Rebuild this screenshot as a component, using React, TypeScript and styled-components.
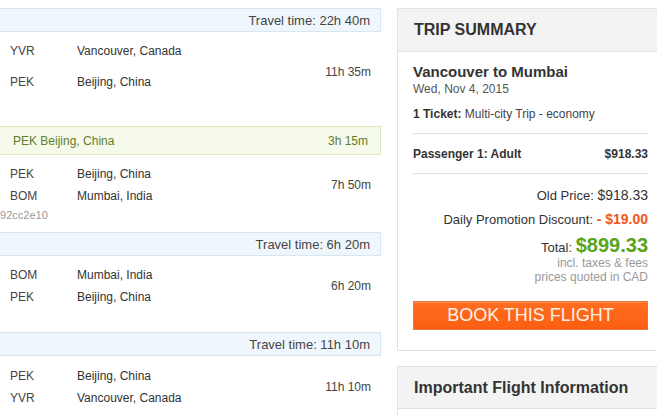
import React from 'react';
import styled, { createGlobalStyle } from 'styled-components';

const GlobalStyle = createGlobalStyle`
  html, body {
    margin: 0;
    padding: 0;
    background: #fff;
    overflow: hidden;
  }
  body {
    font-family: "Liberation Sans", Arial, sans-serif;
    color: #333;
  }
`;

const Page = styled.div`
  display: flex;
  align-items: flex-start;
  gap: 16px;
  width: 657px;
  height: 416px;
  padding-top: 8px;
  box-sizing: border-box;
  overflow: hidden;
`;

const Itinerary = styled.div`
  flex: 0 0 391px;
  margin-left: -10px;
  display: flex;
  flex-direction: column;
`;

const TravelBar = styled.div`
  height: 24px;
  box-sizing: border-box;
  border: 1px solid #d8e6ef;
  background: #f0f7fc;
  display: flex;
  align-items: center;
  justify-content: flex-end;
  padding-right: 10px;
  font-size: 13px;
  color: #444;
`;

const LayoverBar = styled.div`
  height: 29px;
  box-sizing: border-box;
  border: 1px solid #dce9bd;
  background: #f6faea;
  display: flex;
  align-items: center;
  justify-content: space-between;
  padding: 0 12px 0 22px;
  font-size: 12px;
  color: #5f7d2c;
`;

const Segment = styled.div<{ $top: number; $bottom: number; $gap: number }>`
  display: grid;
  grid-template-columns: 67px 1fr auto;
  row-gap: ${(p) => p.$gap}px;
  padding: ${(p) => p.$top}px 10px ${(p) => p.$bottom}px 20px;
  font-size: 12px;
  line-height: 22px;
`;

const Code = styled.div`
  grid-column: 1;
  color: #444;
`;

const City = styled.div`
  grid-column: 2;
  color: #333;
`;

const Duration = styled.div<{ $shift?: number }>`
  grid-column: 3;
  grid-row: 1 / span 2;
  align-self: center;
  padding-top: ${(p) => p.$shift ?? 0}px;
  color: #444;
`;

const FlightRef = styled.div`
  grid-column: 1 / -1;
  margin-left: -16px;
  font-size: 11px;
  line-height: 16px;
  color: #999;
`;

const Sidebar = styled.div`
  flex: 0 0 267px;
  display: flex;
  flex-direction: column;
  gap: 15px;
`;

const Panel = styled.div`
  border: 1px solid #e2e2e2;
  background: #fff;
`;

const PanelHeader = styled.div<{ $height: number }>`
  height: ${(p) => p.$height}px;
  display: flex;
  align-items: center;
  padding-left: 16px;
  background: #f3f3f3;
  border-bottom: 1px solid #e2e2e2;
  font-size: 16px;
  font-weight: bold;
  color: #333;
`;

const PanelBody = styled.div`
  padding: 11px 15px 20px;
  display: flex;
  flex-direction: column;
`;

const Route = styled.div`
  font-size: 15px;
  font-weight: bold;
  line-height: 18px;
  color: #333;
`;

const DateLine = styled.div`
  font-size: 12px;
  line-height: 16px;
  color: #555;
`;

const TicketLine = styled.div`
  margin-top: 9px;
  padding-bottom: 11px;
  border-bottom: 1px solid #e2e2e2;
  font-size: 12px;
  line-height: 16px;
  color: #444;

  b {
    color: #333;
  }
`;

const PassengerRow = styled.div`
  display: flex;
  justify-content: space-between;
  padding: 12px 0 11px;
  border-bottom: 1px solid #e2e2e2;
  font-size: 12px;
  font-weight: bold;
  line-height: 16px;
  color: #333;
`;

const PriceLine = styled.div<{ $mt: number; $lh: number }>`
  margin-top: ${(p) => p.$mt}px;
  height: ${(p) => p.$lh}px;
  text-align: right;
  font-size: 13px;
  line-height: ${(p) => p.$lh}px;
  color: #333;
`;

const Amount = styled.span<{ $size: number; $color: string; $bold?: boolean }>`
  font-size: ${(p) => p.$size}px;
  line-height: 1;
  color: ${(p) => p.$color};
  font-weight: ${(p) => (p.$bold ? 'bold' : 'normal')};
`;

const Note = styled.div`
  text-align: right;
  font-size: 12px;
  line-height: 14px;
  color: #999;
`;

const BookButton = styled.button`
  margin-top: 17px;
  height: 29px;
  width: 100%;
  border: 1px solid #f0743a;
  background: linear-gradient(#ff6e22, #fb5e10);
  color: #fff1e4;
  font-family: "Liberation Sans", Arial, sans-serif;
  font-size: 18px;
  line-height: 27px;
  padding: 0;
  cursor: pointer;
  box-shadow: inset 0 1px 0 rgba(255, 255, 255, 0.2);
`;

const App: React.FC = () => {
  return (
    <>
      <GlobalStyle />
      <Page>
        <Itinerary>
          <TravelBar>Travel time: 22h 40m</TravelBar>
          <Segment $top={8} $bottom={33} $gap={9}>
            <Code>YVR</Code>
            <City>Vancouver, Canada</City>
            <Duration $shift={11}>11h 35m</Duration>
            <Code>PEK</Code>
            <City>Beijing, China</City>
          </Segment>

          <LayoverBar>
            <span>PEK Beijing, China</span>
            <span>3h 15m</span>
          </LayoverBar>
          <Segment $top={8} $bottom={9} $gap={0}>
            <Code>PEK</Code>
            <City>Beijing, China</City>
            <Duration>7h 50m</Duration>
            <Code>BOM</Code>
            <City>Mumbai, India</City>
            <FlightRef>492cc2e10</FlightRef>
          </Segment>

          <TravelBar>Travel time: 6h 20m</TravelBar>
          <Segment $top={8} $bottom={24} $gap={0}>
            <Code>BOM</Code>
            <City>Mumbai, India</City>
            <Duration>6h 20m</Duration>
            <Code>PEK</Code>
            <City>Beijing, China</City>
          </Segment>

          <TravelBar>Travel time: 11h 10m</TravelBar>
          <Segment $top={9} $bottom={20} $gap={0}>
            <Code>PEK</Code>
            <City>Beijing, China</City>
            <Duration>11h 10m</Duration>
            <Code>YVR</Code>
            <City>Vancouver, Canada</City>
          </Segment>
        </Itinerary>

        <Sidebar>
          <Panel>
            <PanelHeader $height={42}>TRIP SUMMARY</PanelHeader>
            <PanelBody>
              <Route>Vancouver to Mumbai</Route>
              <DateLine>Wed, Nov 4, 2015</DateLine>
              <TicketLine>
                <b>1 Ticket:</b> Multi-city Trip - economy
              </TicketLine>
              <PassengerRow>
                <span>Passenger 1: Adult</span>
                <span>$918.33</span>
              </PassengerRow>
              <PriceLine $mt={13} $lh={18}>
                Old Price: <Amount $size={14} $color="#333">$918.33</Amount>
              </PriceLine>
              <PriceLine $mt={6} $lh={18}>
                Daily Promotion Discount:{' '}
                <Amount $size={14} $color="#f1561c" $bold>
                  - $19.00
                </Amount>
              </PriceLine>
              <PriceLine $mt={6} $lh={21}>
                Total:{' '}
                <Amount $size={20} $color="#58a51a" $bold>
                  $899.33
                </Amount>
              </PriceLine>
              <Note>incl. taxes &amp; fees</Note>
              <Note>prices quoted in CAD</Note>
              <BookButton>BOOK THIS FLIGHT</BookButton>
            </PanelBody>
          </Panel>

          <Panel>
            <PanelHeader $height={41}>Important Flight Information</PanelHeader>
            <PanelBody />
          </Panel>
        </Sidebar>
      </Page>
    </>
  );
};

export default App;
